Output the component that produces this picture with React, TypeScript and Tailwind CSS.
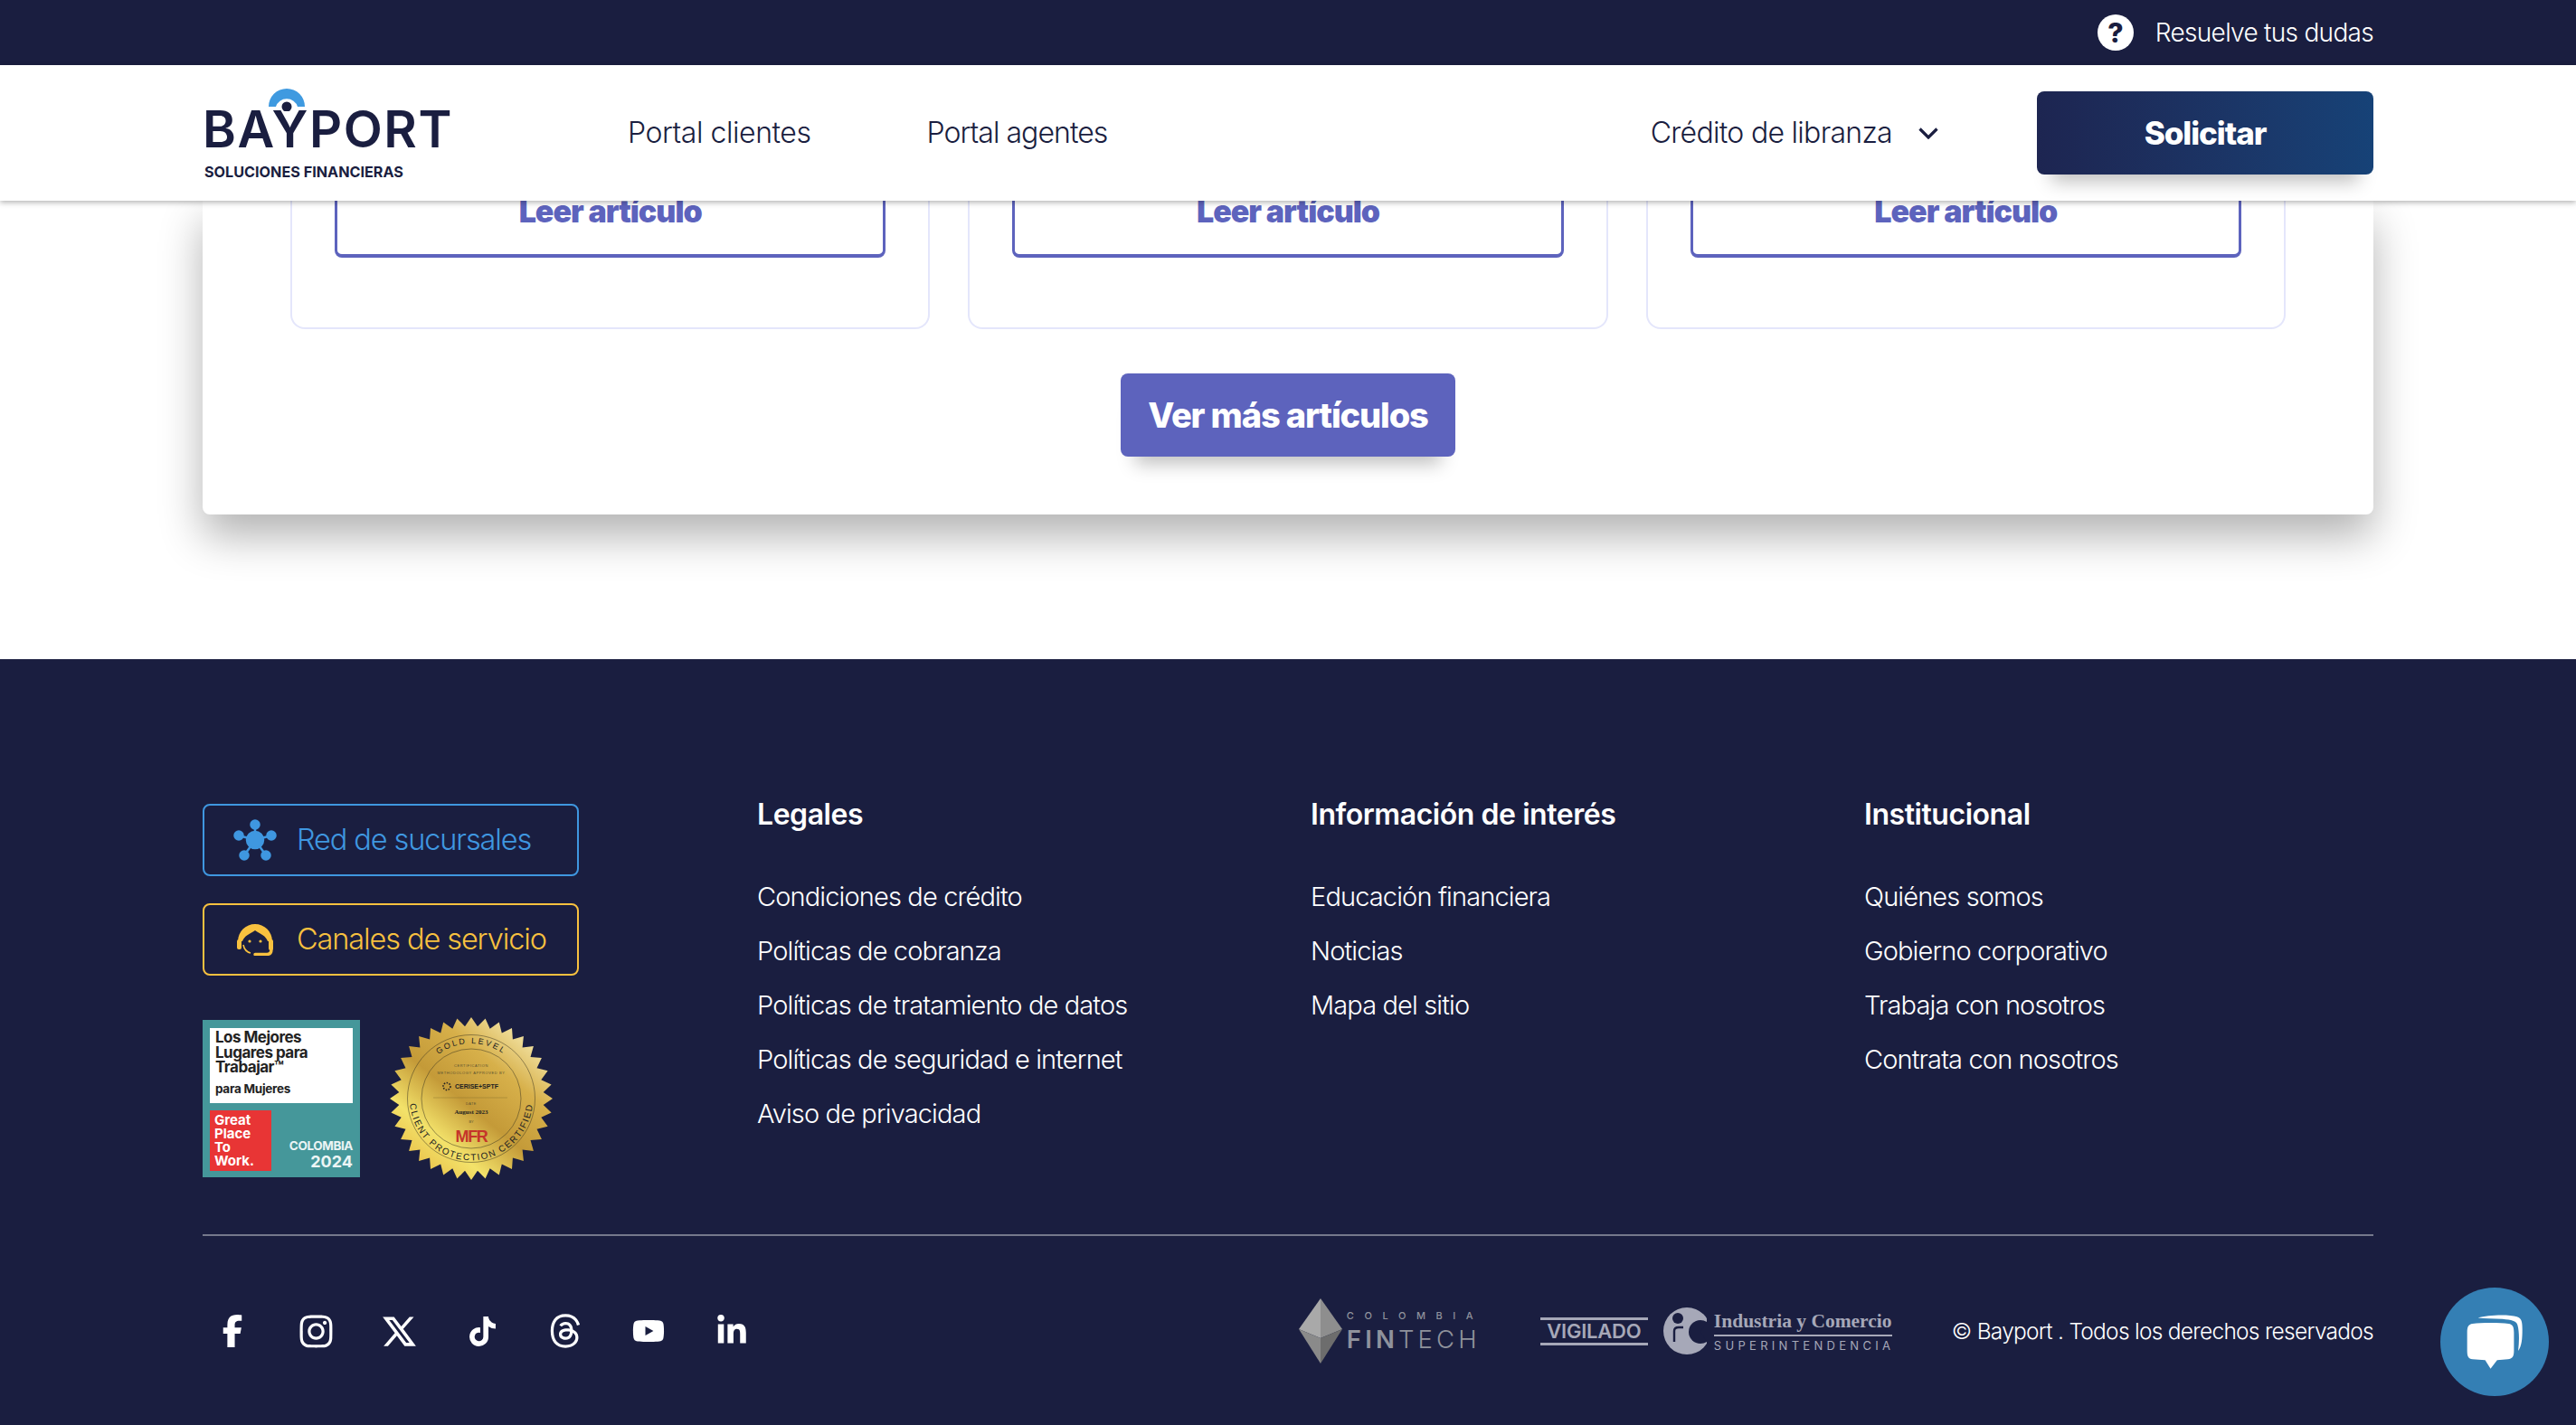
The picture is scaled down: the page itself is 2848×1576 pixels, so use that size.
import { FaFacebookF, FaInstagram, FaTiktok, FaThreads, FaYoutube, FaLinkedinIn } from "react-icons/fa6";
import { RiTwitterXLine } from "react-icons/ri";

const legales = [
  "Condiciones de crédito",
  "Políticas de cobranza",
  "Políticas de tratamiento de datos",
  "Políticas de seguridad e internet",
  "Aviso de privacidad",
];
const interes = ["Educación financiera", "Noticias", "Mapa del sitio"];
const institucional = ["Quiénes somos", "Gobierno corporativo", "Trabaja con nosotros", "Contrata con nosotros"];

const socials = [
  { icon: FaFacebookF, size: "text-[36px]" },
  { icon: FaInstagram, size: "text-[41px]" },
  { icon: RiTwitterXLine, size: "text-[43px]" },
  { icon: FaTiktok, size: "text-[33px]" },
  { icon: FaThreads, size: "text-[40px]" },
  { icon: FaYoutube, size: "text-[36px]" },
  { icon: FaLinkedinIn, size: "text-[36px]" },
];

function sealPoints() {
  const pts: string[] = [];
  const n = 36;
  for (let i = 0; i < n * 2; i++) {
    const r = i % 2 === 0 ? 90 : 80;
    const a = (Math.PI * i) / n;
    pts.push(`${(90 + r * Math.cos(a)).toFixed(1)},${(90 + r * Math.sin(a)).toFixed(1)}`);
  }
  return pts.join(" ");
}

function FooterCol({ title, items }: { title: string; items: string[] }) {
  return (
    <div>
      <h3 className="h-[40px] pt-[2px] text-[32px] leading-[40px] font-semibold tracking-[-0.014em] text-white">{title}</h3>
      <ul className="mt-[43px]">
        {items.map((item) => (
          <li key={item} className="h-[60px] text-[29px] leading-[60px] font-light tracking-[-0.03em] text-white">
            {item}
          </li>
        ))}
      </ul>
    </div>
  );
}

function ArticleCard() {
  return (
    <div className="h-[142px] rounded-b-2xl border-2 border-t-0 border-[#e4e6fb] px-[47px]">
      <div className="h-[63px] rounded-b-lg border-[3px] border-t-0 border-b-4 border-[#5d63bd] text-center text-[34px] leading-[24px] font-black tracking-[-0.03em] text-[#5d63bd]">
        Leer artículo
      </div>
    </div>
  );
}

function Seal() {
  return (
    <svg width="180" height="180" viewBox="0 0 180 180" className="shrink-0">
      <defs>
        <linearGradient id="gold" x1="0.9" y1="0.05" x2="0.15" y2="0.95">
          <stop offset="0" stopColor="#fbf3c0" />
          <stop offset="0.3" stopColor="#d7b04a" />
          <stop offset="0.55" stopColor="#c49a38" />
          <stop offset="0.78" stopColor="#f3e26a" />
          <stop offset="1" stopColor="#e8bc45" />
        </linearGradient>
        <path id="sealTop" d="M 29 90 A 61 61 0 0 1 151 90" />
        <path id="sealBottom" d="M 22.4 83 A 68 68 0 1 0 157.6 83" />
      </defs>
      <polygon points={sealPoints()} fill="url(#gold)" />
      <circle cx="90" cy="90" r="70.5" fill="none" stroke="#3a3420" strokeWidth="0.5" />
      <circle cx="90" cy="90" r="55" fill="none" stroke="#3a3420" strokeWidth="0.5" />
      <text fontFamily="Liberation Sans" fontSize="9" fill="#222" letterSpacing="2.2">
        <textPath href="#sealTop" startOffset="50%" textAnchor="middle">GOLD LEVEL</textPath>
      </text>
      <text fontFamily="Liberation Sans" fontSize="10" fill="#222" letterSpacing="1.6">
        <textPath href="#sealBottom" startOffset="50%" textAnchor="middle">CLIENT PROTECTION CERTIFIED</textPath>
      </text>
      <text x="90" y="55" textAnchor="middle" fontFamily="Liberation Sans" fontSize="4" letterSpacing="0.6" fill="#5a5130">CERTIFICATION</text>
      <text x="90" y="62.5" textAnchor="middle" fontFamily="Liberation Sans" fontSize="4" letterSpacing="0.6" fill="#5a5130">METHODOLOGY APPROVED BY</text>
      <text x="96" y="79" textAnchor="middle" fontFamily="Liberation Sans" fontSize="7" fontWeight="700" fill="#222">CERISE+SPTF</text>
      <circle cx="63" cy="76.5" r="4" fill="none" stroke="#222" strokeWidth="1.6" strokeDasharray="1.5 1.5" />
      <line x1="48" y1="89" x2="130" y2="89" stroke="#7d6b2c" strokeWidth="0.4" />
      <text x="90" y="97" textAnchor="middle" fontFamily="Liberation Sans" fontSize="3.8" letterSpacing="0.5" fill="#5a5130">DATE</text>
      <text x="90" y="106.5" textAnchor="middle" fontFamily="Liberation Serif" fontSize="7" fontWeight="700" fill="#222">August 2023</text>
      <text x="90" y="117" textAnchor="middle" fontFamily="Liberation Sans" fontSize="3.8" fill="#5a5130">BY</text>
      <text x="90" y="138" textAnchor="middle" fontFamily="Liberation Sans" fontSize="18" fontWeight="700" letterSpacing="-1.4" fill="#c5352a">MFR</text>
    </svg>
  );
}

function WorkBadge() {
  return (
    <div className="flex h-[174px] w-[174px] shrink-0 flex-col bg-[#45979a] px-2 pt-[9px] font-['Inter',sans-serif]">
      <div className="h-[83px] bg-white px-[6px] pt-[2px] text-[#222]">
        <p className="text-[17px] leading-[16.5px] font-bold tracking-[-0.03em] whitespace-nowrap">Los Mejores<br />Lugares para<br />Trabajar™</p>
        <p className="mt-[8px] text-[13.5px] leading-[14px] font-bold tracking-[-0.02em]">para Mujeres</p>
      </div>
      <div className="mt-2 flex items-end justify-between">
        <div className="h-[67px] w-[68px] bg-[#e83535] px-[5px] pt-[3px] text-[15px] leading-[15px] font-bold text-white">
          Great<br />Place<br />To<br />Work.
        </div>
        <div className="text-right font-bold text-white/90">
          <p className="text-[13.5px] leading-[16px] tracking-[-0.03em]">COLOMBIA</p>
          <p className="text-[18px] leading-[20px]">2024</p>
        </div>
      </div>
    </div>
  );
}

export default function App() {
  return (
    <div className="relative h-[1576px] w-full overflow-hidden bg-white font-['Inter',sans-serif]">
      {/* top bar */}
      <div className="flex h-[72px] items-center justify-end bg-[#1a1e40] px-[224px]">
        <span className="flex h-10 w-10 items-center justify-center rounded-full bg-white text-[30px] leading-none font-extrabold text-[#1a1e40]">?</span>
        <span className="ml-[24px] text-[28px] font-light tracking-[-0.025em] text-white">Resuelve tus dudas</span>
      </div>

      {/* nav */}
      <header className="relative z-10 flex h-[150px] items-center bg-white px-[224px] shadow-[0_2px_6px_rgba(0,0,0,0.3)]">
        <div className="flex w-[273px] flex-col">
          <svg width="42" height="25" viewBox="0 0 42 25" className="ml-[72px] block">
            <path d="M1 20 A20 20 0 0 1 41 20 L33 20 A12.5 12 0 0 0 9 20 Z" fill="#3f9ae0" />
            <circle cx="21" cy="20" r="5.5" fill="#1a1e40" />
          </svg>
          <span className="h-[41px] text-[56px] leading-[41px] font-semibold tracking-[0.028em] whitespace-nowrap text-[#1a1e40]">BAYPORT</span>
          <span className="mt-[19px] ml-[2px] text-[16.2px] leading-[14px] font-bold whitespace-nowrap text-[#1a1e40]">SOLUCIONES FINANCIERAS</span>
        </div>
        <nav className="ml-[197px] flex gap-[128px] text-[32px] font-light text-[#1a1e40]">
          <a className="tracking-[-0.014em]">Portal clientes</a>
          <a className="tracking-[-0.03em]">Portal agentes</a>
        </nav>
        <div className="ml-auto flex items-center text-[32px] font-light tracking-[-0.022em] text-[#1a1e40]">
          <span>Crédito de libranza</span>
          <svg width="22" height="13" viewBox="0 0 22 13" className="ml-[29px]" fill="none" stroke="#1a1e40" strokeWidth="3.2">
            <path d="M1.5 1.5 L11 11 L20.5 1.5" />
          </svg>
        </div>
        <button className="ml-[109px] h-[92px] w-[372px] rounded-lg bg-gradient-to-r from-[#1d2551] to-[#164277] text-[35px] font-extrabold tracking-[-0.03em] text-white shadow-[0_24px_20px_-16px_rgba(0,0,0,0.25)]">
          Solicitar
        </button>
      </header>

      {/* articles */}
      <section className="mx-[224px] mb-[160px] rounded-b-lg bg-white px-[97px] pb-[64px] shadow-[0_24px_48px_rgba(0,0,0,0.3)]">
        <div className="grid grid-cols-3 gap-[42px]">
          <ArticleCard />
          <ArticleCard />
          <ArticleCard />
        </div>
        <div className="mt-[49px] flex justify-center">
          <button className="h-[92px] w-[370px] rounded-lg bg-[#5d63bd] text-[38px] font-extrabold tracking-[-0.03em] text-white shadow-[0_24px_20px_-16px_rgba(0,0,0,0.25)]">
            Ver más artículos
          </button>
        </div>
      </section>

      {/* footer */}
      <footer className="bg-[#1a1e40] px-[224px]">
        <div className="grid grid-cols-[613px_612px_612px_1fr] pt-[150px]">
          <div className="pt-[10px]">
            <a className="flex h-[80px] w-[416px] items-center rounded-lg border-2 border-[#3f97e0] pl-[32px] text-[32.5px] font-light tracking-[-0.034em] text-[#3f97e0]">
              <svg width="48" height="46" viewBox="0 0 48 46" fill="#3f97e0" stroke="#3f97e0" strokeWidth="2.5" className="shrink-0">
                <path d="M24 23 L24 6 M24 23 L6 18 M24 23 L42 18 M24 23 L12 40 M24 23 L36 40" fill="none" />
                <circle cx="24" cy="23" r="9" />
                <circle cx="24" cy="6" r="4.5" />
                <circle cx="6" cy="18" r="4.5" />
                <circle cx="42" cy="18" r="4.5" />
                <circle cx="12" cy="40" r="4.5" />
                <circle cx="36" cy="40" r="4.5" />
              </svg>
              <span className="ml-[22px]">Red de sucursales</span>
            </a>
            <a className="mt-[30px] flex h-[80px] w-[416px] items-center rounded-lg border-2 border-[#f8c13f] pl-[36px] text-[32.5px] font-light tracking-[-0.034em] text-[#f8c13f]">
              <svg width="40" height="36" viewBox="0 0 40 36" fill="#f8c13f" className="shrink-0">
                <path d="M1 20 A19 19 0 0 1 39 20 L34 20 C32 14 26 12 20 8 C14 12 8 14 6 20 Z" />
                <rect x="0" y="18" width="5" height="11" rx="2" />
                <rect x="35" y="18" width="5" height="12" rx="2" />
                <circle cx="14" cy="20" r="1.6" />
                <circle cx="26" cy="20" r="1.6" />
                <path d="M7 24 C8 29 11 32 15 33" fill="none" stroke="#f8c13f" strokeWidth="1.6" />
                <path d="M38 29 C38 33 36 34.5 33 34.5 L20 34.5" fill="none" stroke="#f8c13f" strokeWidth="3.4" strokeLinecap="round" />
              </svg>
              <span className="ml-[26px]">Canales de servicio</span>
            </a>
            <div className="mt-[46px] flex items-center gap-[33px]">
              <WorkBadge />
              <Seal />
            </div>
          </div>
          <FooterCol title="Legales" items={legales} />
          <FooterCol title="Información de interés" items={interes} />
          <FooterCol title="Institucional" items={institucional} />
        </div>

        <div className="mt-[60px] h-[2px] bg-white/40" />

        <div className="flex h-[210px] items-center">
          <div className="flex pl-[15px] text-white">
            {socials.map(({ icon: Icon, size }, i) => (
              <span key={i} className={`flex h-[40px] w-[36px] items-center justify-center [&>svg]:shrink-0 ${i > 0 ? "ml-[56px]" : ""} ${size}`}>
                <Icon />
              </span>
            ))}
          </div>

          <div className="ml-auto flex items-center">
            {/* colombia fintech */}
            <svg width="48" height="72" viewBox="0 0 48 72" className="shrink-0">
              <polygon points="24,0 0,34 24,44" fill="#a9a9a9" />
              <polygon points="24,0 48,34 24,44" fill="#8e8e8e" />
              <polygon points="0,34 24,44 24,72" fill="#8a8a8a" />
              <polygon points="48,34 24,44 24,72" fill="#6d6d6d" />
            </svg>
            <div className="ml-[5px] flex w-[145px] flex-col text-[#8f929c]">
              <span className="text-[11px] leading-[12px] font-medium tracking-[1.05em] whitespace-nowrap">COLOMBIA</span>
              <span className="mt-[6px] text-[27.5px] leading-[28px] tracking-[0.15em] whitespace-nowrap">
                <span className="font-semibold">FIN</span>
                <span className="font-light">TECH</span>
              </span>
            </div>

            {/* vigilado */}
            <div className="ml-[69px] flex h-[31px] w-[119px] flex-col justify-center border-y-[3px] border-[#a6a8b8] text-center text-[22px] leading-none font-semibold tracking-[-0.01em] text-[#a6a8b8]">
              VIGILADO
            </div>
            <svg width="48" height="52" viewBox="0 0 48 52" className="ml-[17px] shrink-0">
              <circle cx="26" cy="26" r="26" fill="#a6a8b8" />
              <circle cx="16" cy="12" r="6" fill="#1a1e40" />
              <path d="M12 38 L12 26 Q12 22 17 22 L22 22" fill="none" stroke="#1a1e40" strokeWidth="2.4" />
              <circle cx="41" cy="27" r="13" fill="#1a1e40" />
              <polygon points="41,27 54,6 54,48" fill="#1a1e40" />
            </svg>
            <div className="ml-[8px] flex w-[197px] flex-col text-[#a6a8b8]">
              <span className="border-b-2 border-[#a6a8b8] pb-[3px] font-['Liberation_Serif',serif] text-[21.5px] leading-[24px] font-bold whitespace-nowrap">Industria y Comercio</span>
              <span className="mt-[3px] text-[13px] leading-[14px] font-normal tracking-[0.33em] whitespace-nowrap">SUPERINTENDENCIA</span>
            </div>

            <span className="ml-[66px] text-[24.5px] font-light tracking-[-0.03em] whitespace-nowrap text-white">© Bayport . Todos los derechos reservados</span>
          </div>
        </div>
      </footer>

      {/* chat launcher */}
      <div className="fixed right-[30px] bottom-[32px] z-20 flex h-[120px] w-[120px] items-center justify-center rounded-full bg-[#347fb4]">
        <svg width="63" height="60" viewBox="0 0 190 180" fill="#fff">
          <path d="M38 10 C70 0 140 -2 168 6 C184 10 186 24 186 50 C186 80 184 105 172 120 C176 90 176 55 170 34 C166 20 150 17 120 14 C90 12 60 12 38 10 Z" />
          <path d="M20 30 C50 26 110 26 140 30 C154 32 158 40 158 60 L158 120 C158 140 152 146 138 148 L102 151 L80 180 L62 151 L20 148 C6 146 2 138 2 120 L2 60 C2 40 6 32 20 30 Z" />
        </svg>
      </div>
    </div>
  );
}
